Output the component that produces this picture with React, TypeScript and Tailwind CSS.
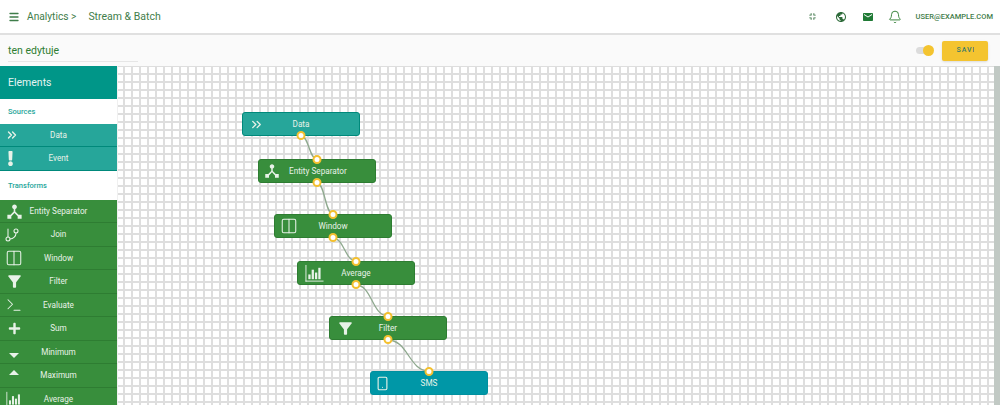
import { Bell, ChevronsRight, Columns2, GitBranch, Menu, Smartphone, Terminal } from "lucide-react";
import { ReactNode } from "react";
import { FaExclamation, FaPlus } from "react-icons/fa";
import {
  MdArrowDropDown,
  MdArrowDropUp,
  MdDeviceHub,
  MdEmail,
  MdFilterAlt,
  MdFullscreenExit,
  MdPublic,
} from "react-icons/md";

function BarsIcon({ className }: { className: string }) {
  return (
    <svg viewBox="0 0 20 20" className={className} fill="currentColor">
      <rect x="0.5" y="1" width="1" height="17.5" />
      <rect x="0.5" y="17.5" width="19" height="1" />
      <rect x="3.5" y="11" width="2.4" height="5" />
      <rect x="7" y="6" width="2.4" height="10" />
      <rect x="10.5" y="9" width="2.4" height="7" />
      <rect x="14" y="4" width="2.4" height="12" />
    </svg>
  );
}

const sources = [
  { label: "Data", icon: <ChevronsRight className="size-[14px] -ml-1" strokeWidth={2.4} /> },
  { label: "Event", icon: <FaExclamation className="size-[15px] -ml-2" /> },
];

const transforms = [
  { label: "Entity Separator", icon: <MdDeviceHub className="size-[19px]" /> },
  { label: "Join", icon: <GitBranch className="size-[16px] -ml-1" strokeWidth={1.6} /> },
  { label: "Window", icon: <Columns2 className="size-[18px]" strokeWidth={1.4} /> },
  { label: "Filter", icon: <MdFilterAlt className="size-[19px]" /> },
  { label: "Evaluate", icon: <Terminal className="size-[18px]" strokeWidth={1.4} /> },
  { label: "Sum", icon: <FaPlus className="size-[13px]" /> },
  { label: "Minimum", icon: <MdArrowDropDown className="size-[24px] translate-y-[3px]" /> },
  { label: "Maximum", icon: <MdArrowDropUp className="size-[24px] -translate-y-[3px]" /> },
  { label: "Average", icon: <BarsIcon className="size-[17px]" /> },
];

const nodes = [
  {
    label: "Data",
    place: "left-[124px] top-[46px]",
    colour: "bg-[#26a69a] border-[#00897b]",
    icon: <ChevronsRight className="size-[15px] -ml-1" strokeWidth={2.2} />,
    top: false,
    bottom: true,
  },
  {
    label: "Entity Separator",
    place: "left-[140px] top-[93px]",
    colour: "bg-[#388e3c] border-[#2e7d32]",
    icon: <MdDeviceHub className="size-[18px] -ml-1" />,
    top: true,
    bottom: true,
  },
  {
    label: "Window",
    place: "left-[156px] top-[148px]",
    colour: "bg-[#388e3c] border-[#2e7d32]",
    icon: <Columns2 className="size-[18px] -ml-0.5" strokeWidth={1.4} />,
    top: true,
    bottom: true,
  },
  {
    label: "Average",
    place: "left-[179px] top-[195px]",
    colour: "bg-[#388e3c] border-[#2e7d32]",
    icon: <BarsIcon className="size-[19px] ml-0.5" />,
    top: true,
    bottom: true,
  },
  {
    label: "Filter",
    place: "left-[211px] top-[250px]",
    colour: "bg-[#388e3c] border-[#2e7d32]",
    icon: <MdFilterAlt className="size-[19px]" />,
    top: true,
    bottom: true,
  },
  {
    label: "SMS",
    place: "left-[252px] top-[305px]",
    colour: "bg-[#0097a7] border-[#00909f]",
    icon: <Smartphone className="size-[15px] -ml-2" strokeWidth={1.8} />,
    top: true,
    bottom: false,
  },
];

const links = [
  "M183 70 C191 70 191 93 199 93",
  "M199 117 C207 117 207 148 215 148",
  "M215 172 C226 172 227 195 238 195",
  "M238 219 C254 219 254 250 270 250",
  "M270 274 C290 274 291 305 311 305",
];

function Row({ label, icon, colour }: { label: string; icon: ReactNode; colour: string }) {
  return (
    <div className={`grid grid-cols-[28px_1fr_28px] grid-rows-[23px] items-center h-[23.5px] shrink-0 border-b text-[8.2px] text-[#e8f2e8] ${colour}`}>
      <span className="flex justify-center">{icon}</span>
      <span className="text-center whitespace-nowrap">{label}</span>
    </div>
  );
}

function Port({ place }: { place: string }) {
  return <span className={`absolute left-1/2 -translate-x-1/2 size-[9px] rounded-full bg-white border-[2.5px] border-[#f4c02f] ${place}`} />;
}

function FlowNode({ label, place, colour, icon, top, bottom }: { label: string; place: string; colour: string; icon: ReactNode; top: boolean; bottom: boolean }) {
  return (
    <div className={`absolute w-[118px] h-[24px] rounded-[3px] border grid grid-cols-[30px_1fr_30px] items-center text-[8.2px] text-[#e8f2e8] ${place} ${colour}`}>
      <span className="flex justify-center">{icon}</span>
      <span className="text-center whitespace-nowrap">{label}</span>
      {top && <Port place="-top-[5px]" />}
      {bottom && <Port place="-bottom-[5px]" />}
    </div>
  );
}

export default function App() {
  return (
    <div className="h-screen flex flex-col overflow-hidden bg-white font-['Roboto',sans-serif]">
      {/* Header */}
      <div className="h-[33px] shrink-0 flex items-center pl-[8px] pr-[7px] text-[#3f7d4a]">
        <Menu className="size-[12px] mr-[7px]" strokeWidth={2.6} />
        <span className="text-[10.2px] mr-[12px]">Analytics &gt;</span>
        <span className="text-[10.5px]">Stream &amp; Batch</span>
        <div className="ml-auto flex items-center">
          <MdFullscreenExit className="size-[11px] mr-[17px] text-[#2e6b3a]" />
          <MdPublic className="size-[12px] mr-[15px] text-[#2e6b3a]" />
          <MdEmail className="size-[12px] mr-[14px] text-[#1f7a35]" />
          <Bell className="size-[14px] mr-[14px] text-[#2e7d32]" strokeWidth={1.6} />
          <span className="text-[7.5px] font-medium text-[#3f7d4a]">USER@EXAMPLE.COM</span>
        </div>
      </div>

      {/* Name bar */}
      <div className="h-[33px] shrink-0 flex items-center border-t-2 border-[#e0e0e0] bg-[#fafafa] pl-[8px] pr-[12px]">
        <div className="w-[130px] h-[22px] flex items-center pt-[2px] border-b border-[#e6e6e6] text-[10.5px] text-[#2e7d32]">ten edytuje</div>
        <div className="ml-auto relative w-[16px] h-[7px] rounded-full bg-[#dcdcdc] mr-[10px]">
          <span className="absolute -right-[2px] -top-[2px] size-[11px] rounded-full bg-[#f4c430]" />
        </div>
        <button className="w-[46px] h-[20px] rounded-[2px] bg-[#f4c430] shadow-sm flex items-center justify-center text-[7px] tracking-[1px] font-medium text-[#3a7a6a]">
          <span className="w-[17px] overflow-hidden whitespace-nowrap">SAVE</span>
        </button>
      </div>

      <div className="flex-1 min-h-0 flex">
        {/* Sidebar */}
        <div className="w-[118px] shrink-0 flex flex-col overflow-hidden border-r border-[#f0f0f0]">
          <div className="h-[33px] shrink-0 flex items-center pl-[8px] bg-[#009688] text-[10.5px] text-[#e6f4f2] mb-px">Elements</div>
          <div className="h-[23.5px] shrink-0 flex items-center pl-[8px] text-[7.5px] font-medium text-[#26a69a]">Sources</div>
          {sources.map((item) => (
            <Row key={item.label} label={item.label} icon={item.icon} colour="bg-[#26a69a] border-[#00897b]" />
          ))}
          <div className="h-[29px] shrink-0 flex items-center pt-[2px] pl-[8px] text-[7.5px] font-medium text-[#26a69a]">Transforms</div>
          {transforms.map((item) => (
            <Row key={item.label} label={item.label} icon={item.icon} colour="bg-[#388e3c] border-[#2e7d32]" />
          ))}
        </div>

        {/* Canvas */}
        <div className="relative flex-1 overflow-hidden bg-white bg-[linear-gradient(to_right,transparent_5px,#dedede_5px,#dedede_7px,transparent_7px),linear-gradient(to_bottom,#dedede_1px,transparent_1px,transparent_7px,#dedede_7px)] bg-[size:8px_8px]">
          <svg className="absolute inset-0 w-full h-full" fill="none" stroke="#8fa98f" strokeWidth="1.3">
            {links.map((d) => (
              <path key={d} d={d} />
            ))}
          </svg>
          {nodes.map((node) => (
            <FlowNode key={node.label} {...node} />
          ))}
        </div>

        {/* Scrollbar */}
        <div className="w-[6px] shrink-0 bg-[#c1c9c4]" />
      </div>
    </div>
  );
}
